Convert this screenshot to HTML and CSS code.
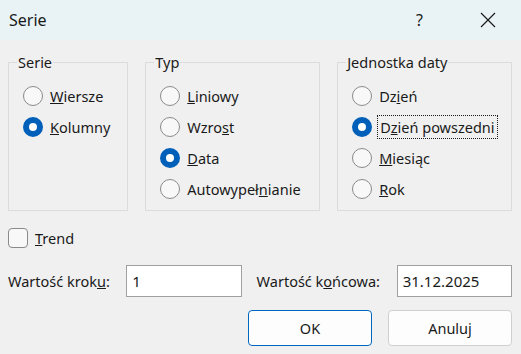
FILE: index.html
```html
<!DOCTYPE html>
<html lang="pl">
<head>
    <meta charset="UTF-8">
    <meta name="viewport" content="width=device-width, initial-scale=1.0">
    <title>Serie</title>
    <link rel="stylesheet" href="styles.css">
</head>
<body>
    <div class="dialog">
        <div class="titlebar">
            <span class="title">Serie</span>
            <span class="help">?</span>
            <span class="close">
                <svg width="16" height="16" viewBox="0 0 16 16">
                    <path d="M1 1 L15 15 M15 1 L1 15" stroke="#1a1a1a" stroke-width="1.2" fill="none"/>
                </svg>
            </span>
        </div>

        <div class="body">
            <div class="groups">
                <fieldset class="group group-serie">
                    <legend>Serie</legend>
                    <label class="option"><span class="radio"></span><span><u>W</u>iersze</span></label>
                    <label class="option"><span class="radio checked"></span><span><u>K</u>olumny</span></label>
                </fieldset>

                <fieldset class="group">
                    <legend>Typ</legend>
                    <label class="option"><span class="radio"></span><span><u>L</u>iniowy</span></label>
                    <label class="option"><span class="radio"></span><span>Wzro<u>s</u>t</span></label>
                    <label class="option"><span class="radio checked"></span><span><u>D</u>ata</span></label>
                    <label class="option"><span class="radio"></span><span>Autowypeł<u>n</u>ianie</span></label>
                </fieldset>

                <fieldset class="group">
                    <legend>Jednostka daty</legend>
                    <label class="option"><span class="radio"></span><span>Dz<u>i</u>eń</span></label>
                    <label class="option"><span class="radio checked"></span><span class="focused">D<u>z</u>ień powszedni</span></label>
                    <label class="option"><span class="radio"></span><span><u>M</u>iesiąc</span></label>
                    <label class="option"><span class="radio"></span><span><u>R</u>ok</span></label>
                </fieldset>
            </div>

            <label class="trend"><span class="checkbox"></span><span><u>T</u>rend</span></label>

            <div class="fields">
                <span class="field-label">Wartość krok<u>u</u>:</span>
                <span class="textbox">1</span>
                <span class="field-label end-label">Wartość k<u>o</u>ńcowa:</span>
                <span class="textbox">31.12.2025</span>
            </div>

            <div class="buttons">
                <button class="btn btn-default">OK</button>
                <button class="btn">Anuluj</button>
            </div>
        </div>
    </div>
</body>
</html>
```

FILE: styles.css
```css
body {
    margin: 0;
    font-family: "Segoe UI", "Noto Sans", sans-serif;
    font-size: 14.5px;
    color: #1a1a1a;
    background: #f0f0f0;
}

.dialog {
    width: 521px;
    height: 354px;
    background: #f0f0f0;
    overflow: hidden;
}

/* Title bar */
.titlebar {
    height: 40px;
    background: #e9f3f6;
    display: flex;
    align-items: center;
    padding-left: 9px;
}

.title {
    font-size: 16px;
    flex: 1;
}

.help {
    font-size: 16px;
    width: 20px;
    margin-right: 44px;
}

.close {
    display: flex;
    margin-right: 25px;
}

/* Content */
.body {
    padding: 13px 9px 0 8px;
}

.groups {
    display: flex;
    gap: 17px;
}

.group {
    margin: 0;
    border: 1px solid #dcdcdc;
    padding: 9px 9px 0 14px;
    height: 158px;
    box-sizing: border-box;
    width: 176px;
}

.group-serie {
    width: 121px;
}

.group legend {
    padding: 0 1px;
    margin-left: -6px;
    line-height: 18px;
}

.option {
    display: flex;
    align-items: center;
    height: 31px;
    gap: 7px;
    white-space: nowrap;
}

.radio {
    width: 18px;
    height: 18px;
    border: 1px solid #8a8a8a;
    border-radius: 50%;
    background: #f8f8f8;
    flex: none;
    box-sizing: content-box;
}

.radio.checked {
    border-color: #005fb8;
    background: #ffffff;
    width: 8px;
    height: 8px;
    border-width: 6px;
}

.focused {
    outline: 1px dotted #1a1a1a;
    outline-offset: 1px;
    padding: 0 1px;
}

/* Trend checkbox */
.trend {
    display: flex;
    align-items: center;
    gap: 7px;
    margin-top: 17px;
    height: 20px;
}

.checkbox {
    width: 18px;
    height: 18px;
    border: 1px solid #8a8a8a;
    border-radius: 4px;
    background: #f8f8f8;
}

/* Value fields */
.fields {
    display: flex;
    align-items: center;
    margin-top: 17px;
    height: 32px;
}

.field-label {
    width: 119px;
}

.end-label {
    width: 141px;
    margin-left: 15px;
}

.textbox {
    width: 107px;
    height: 30px;
    border: 1px solid #a0a0a0;
    background: #fff;
    padding: 0 2px 0 5px;
    display: flex;
    align-items: center;
    line-height: 1;
    font-size: 15px;
    box-sizing: content-box;
}

/* Buttons */
.buttons {
    display: flex;
    justify-content: flex-end;
    gap: 16px;
    margin-top: 13px;
}

.btn {
    width: 124px;
    height: 36px;
    font-family: inherit;
    font-size: 14.5px;
    color: #1a1a1a;
    background: #fdfdfd;
    border: 1px solid #d0d0d0;
    border-radius: 4px;
}

.btn-default {
    border-color: #0067c0;
}
```
